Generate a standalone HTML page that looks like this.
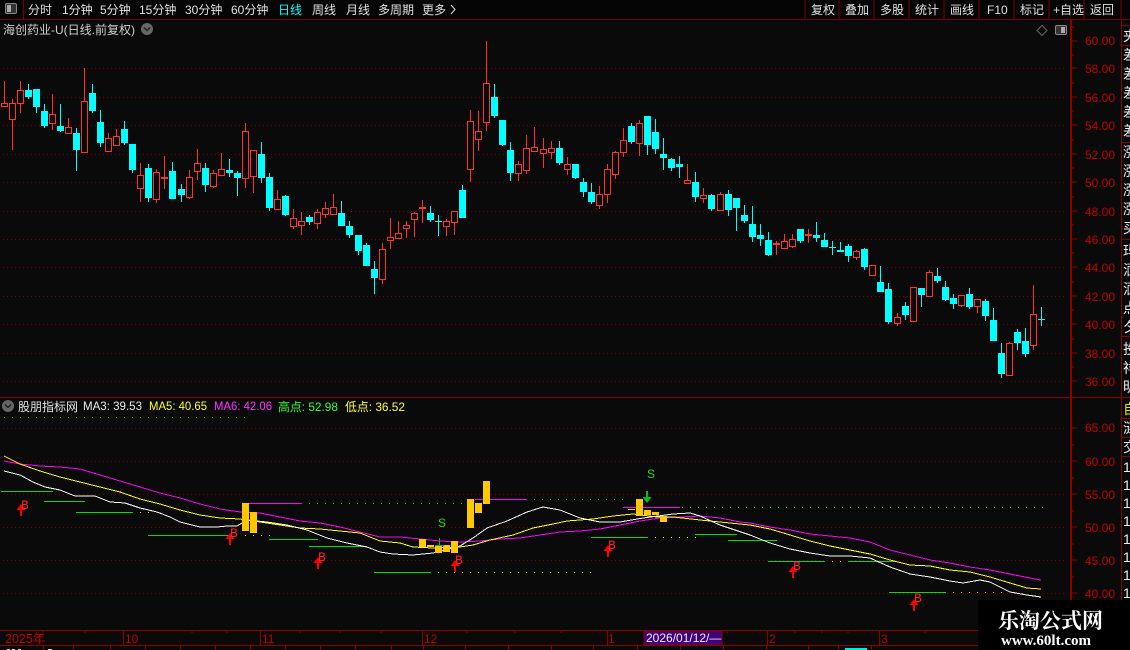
<!DOCTYPE html>
<html><head><meta charset="utf-8"><title>chart</title>
<style>
html,body{margin:0;padding:0;background:#0a0a0a;width:1130px;height:650px;overflow:hidden}
svg{display:block;position:absolute;left:0;top:0}
text{font-family:"Liberation Sans","Noto Sans CJK SC",sans-serif;font-size:12px;dominant-baseline:auto}
.l{fill:#c00000;font-size:12.5px}
.m{fill:#e0e0e0}
.g line{stroke:#6e0000;stroke-dasharray:1 3}
.ax line,.ax path{stroke:#8b0000}
.p text{fill:#eee;font-size:14px}
.b{font-family:"Liberation Mono",monospace;font-size:13px;fill:#ff2020}
</style></head><body>
<svg width="1130" height="650" viewBox="0 0 1130 650" xmlns="http://www.w3.org/2000/svg">
<rect width="1130" height="650" fill="#0a0a0a"/>
<!-- top bar -->
<rect width="1130" height="19" fill="#050505"/>
<g shape-rendering="crispEdges">
<rect x="0" y="19" width="1130" height="1" fill="#7a0000"/>
<rect x="23" y="0" width="1" height="19" fill="#7a0000"/>
<path d="M805 0V19M839 0V19M874 0V19M909 0V19M944 0V19M979 0V19M1014 0V19M1049 0V19M1084 0V19M1121 0V19" stroke="#7a0000" fill="none"/>
</g>
<rect x="5.5" y="3.5" width="11" height="10" rx="1.5" fill="#333" stroke="#888"/><rect x="7" y="5" width="4" height="7" fill="#aaa"/>
<g class="m">
<text x="28" y="14">分时</text><text x="62" y="14">1分钟</text><text x="100" y="14">5分钟</text><text x="139" y="14">15分钟</text><text x="185" y="14">30分钟</text><text x="231" y="14">60分钟</text>
<text x="278" y="14" style="fill:#00ffff">日线</text><text x="312" y="14">周线</text><text x="346" y="14">月线</text><text x="378" y="14">多周期</text><text x="422" y="14">更多</text>
<text x="811" y="14">复权</text><text x="845" y="14">叠加</text><text x="880" y="14">多股</text><text x="915" y="14">统计</text><text x="950" y="14">画线</text><text x="987" y="14">F10</text><text x="1020" y="14">标记</text><text x="1053" y="14">+自选</text><text x="1090" y="14">返回</text>
</g>
<path d="M451 5l4 4.500-4 4.500" fill="none" stroke="#ddd"/>
<!-- title -->
<text x="3" y="34" fill="#cfcfcf">海创药业-U(日线.前复权)</text>
<circle cx="147" cy="29" r="6" fill="#666"/><path d="M144 27.500l3 3 3-3" fill="none" stroke="#222" stroke-width="1.500"/>
<path d="M1042 25.500l5 5-5 5-5-5z" fill="none" stroke="#666"/>
<rect x="1055.500" y="25.500" width="11" height="9" rx="1.500" fill="#333" stroke="#888"/><rect x="1061" y="27" width="4" height="6" fill="#aaa"/>
<!-- grid -->
<g class="g" shape-rendering="crispEdges">
<line x1="3" x2="1067" y1="68.500" y2="68.500"/><line x1="3" x2="1067" y1="97.500" y2="97.500"/><line x1="3" x2="1067" y1="125.500" y2="125.500"/><line x1="3" x2="1067" y1="154.500" y2="154.500"/><line x1="3" x2="1067" y1="182.500" y2="182.500"/><line x1="3" x2="1067" y1="211.500" y2="211.500"/><line x1="3" x2="1067" y1="239.500" y2="239.500"/><line x1="3" x2="1067" y1="267.500" y2="267.500"/><line x1="3" x2="1067" y1="296.500" y2="296.500"/><line x1="3" x2="1067" y1="324.500" y2="324.500"/><line x1="3" x2="1067" y1="353.500" y2="353.500"/><line x1="3" x2="1067" y1="381.500" y2="381.500"/>
<line x1="3" x2="1067" y1="428.500" y2="428.500"/><line x1="3" x2="1067" y1="461.500" y2="461.500"/><line x1="3" x2="1067" y1="494.500" y2="494.500"/><line x1="3" x2="1067" y1="527.500" y2="527.500"/><line x1="3" x2="1067" y1="560.500" y2="560.500"/><line x1="3" x2="1067" y1="593.500" y2="593.500"/>
</g>
<g id="candles" shape-rendering="crispEdges"></g>
<!-- axes -->
<g class="ax" shape-rendering="crispEdges" fill="none">
<path d="M1070.500 20V630M1071.500 20V630" />
<path d="M0 397.500H1130M0 630.500H1130M0 645.500H1130M1121.500 20V650"/>
<path d="M1071 41h6M1071 68h6M1071 97h6M1071 125h6M1071 154h6M1071 182h6M1071 211h6M1071 239h6M1071 267h6M1071 296h6M1071 324h6M1071 353h6M1071 381h6M1071 55h3M1071 83h3M1071 111h3M1071 140h3M1071 168h3M1071 197h3M1071 225h3M1071 253h3M1071 282h3M1071 310h3M1071 339h3M1071 367h3M1071 27h3"/>
<path d="M1071 428h6M1071 461h6M1071 494h6M1071 527h6M1071 560h6M1071 593h6M1071 445h3M1071 478h3M1071 511h3M1071 544h3M1071 577h3M1071 610h3"/>
<path d="M1121 25.500h9M1121 45.500h9M1121 142.500h9M1121 239.500h9M1121 336.500h9M1121 418.500h9M1121 437.500h9M1121 456.500h9"/>
<path d="M123.500 630V645M260.500 630V645M422.500 630V645M607.500 630V645M767.500 630V645M879.500 630V645"/>
<path d="M43 630v3M85 630v3M192 630v3M227 630v3M300 630v3M340 630v3M381 630v3M467 630v3M515 630v3M561 630v3M727 630v3M795 630v3M822 630v3M848 630v3M925 630v3"/>
<path d="M43.500 646V650M73.500 646V650M110.500 646V650M145.500 646V650M180.500 646V650M215.500 646V650M250.500 646V650M285.500 646V650M320.500 646V650M355.500 646V650M391.500 646V650M423.500 646V650M465.500 646V650M508.500 646V650M551.500 646V650M593.500 646V650M637.500 646V650M680.500 646V650M723.500 646V650M766.500 646V650M808.500 646V650M838.500 646V650M871.500 646V650"/>
</g>
<g class="l">
<text x="1085" y="45">60.00</text><text x="1085" y="73">58.00</text><text x="1085" y="102">56.00</text><text x="1085" y="130">54.00</text><text x="1085" y="159">52.00</text><text x="1085" y="187">50.00</text><text x="1085" y="216">48.00</text><text x="1085" y="244">46.00</text><text x="1085" y="272">44.00</text><text x="1085" y="301">42.00</text><text x="1085" y="329">40.00</text><text x="1085" y="358">38.00</text><text x="1085" y="386">36.00</text>
<text x="1085" y="432">65.00</text><text x="1085" y="466">60.00</text><text x="1085" y="499">55.00</text><text x="1085" y="532">50.00</text><text x="1085" y="565">45.00</text><text x="1085" y="598">40.00</text>
</g>
<!-- right panel text (clipped) -->
<svg x="1122" y="20" width="8" height="630" viewBox="1122 20 8 630" overflow="hidden"><g class="p">
<text x="1123" y="41">夹</text><text x="1123" y="60">差</text><text x="1123" y="79">差</text><text x="1123" y="98">差</text><text x="1123" y="117">差</text><text x="1123" y="136">差</text>
<text x="1123" y="157">涨</text><text x="1123" y="176">涨</text><text x="1123" y="195">涨</text><text x="1123" y="214">涨</text><text x="1123" y="233">买</text>
<text x="1123" y="256">玛</text><text x="1123" y="275">湎</text><text x="1123" y="294">湎</text><text x="1123" y="313">点</text><text x="1123" y="332">夕</text>
<text x="1123" y="354">投</text><text x="1123" y="373">祥</text><text x="1123" y="392">明</text>
<text x="1123" y="414" style="fill:#e6e600">自</text><text x="1123" y="433">涟</text><text x="1123" y="452">交</text>
<text x="1123" y="472">1</text><text x="1123" y="490">1</text><text x="1123" y="508">1</text><text x="1123" y="526">1</text><text x="1123" y="544">1</text><text x="1123" y="562">1</text><text x="1123" y="580">1</text><text x="1123" y="598">1</text>
</g></svg>
<!-- sub header -->
<circle cx="8" cy="406" r="6" fill="#666"/><path d="M5 404.500l3 3 3-3" fill="none" stroke="#222" stroke-width="1.500"/>
<text x="18" y="411" fill="#e0e0e0">股朋指标网</text>
<text x="83" y="410" fill="#e8e8e8" textLength="59" lengthAdjust="spacingAndGlyphs">MA3: 39.53</text>
<text x="149" y="410" fill="#ffff33" textLength="58" lengthAdjust="spacingAndGlyphs">MA5: 40.65</text>
<text x="214" y="410" fill="#ff33ff" textLength="58" lengthAdjust="spacingAndGlyphs">MA6: 42.06</text>
<text x="278" y="411" fill="#33ff33" textLength="60" lengthAdjust="spacingAndGlyphs">高点: 52.98</text>
<text x="345" y="411" fill="#ffff33" textLength="60" lengthAdjust="spacingAndGlyphs">低点: 36.52</text>
<!-- dots -->
<g shape-rendering="crispEdges" fill="none" stroke-dasharray="1 7">
<path stroke="#00e000" d="M4 417.500H250M309 503.500H466M534 499.500H628M682 507.500H1044"/>
<path stroke="#e6e600" d="M438 572.500H594M655 537.500H697M245 535.500H272M832 561.500H842M953 592.500H1004M140 512.500H150"/>
</g>
<!-- segments -->
<g shape-rendering="crispEdges" fill="none" stroke="#00e000">
<path d="M1 491.500H53M44 501.500H85M76 512.500H133M148 535.500H230M269 539.500H318M309 546.500H367M374 572.500H431M591 537.500H648M695 534.500H737M728 540.500H777M768 561.500H825M848 561.500H895M889 592.500H946"/>
<path stroke="#ff00ff" d="M249 503.500H302M475 499.500H527M623 507.500H680"/>
</g>
<!-- MA lines -->
<g fill="none" shape-rendering="crispEdges" stroke-width="1">
<polyline stroke="#ff00ff" points="4,461 20,464 40,466 60,467 80,469 100,475 120,481 140,487 160,493 180,498 200,504 220,509 240,512 260,513 280,517 300,521 320,523 340,527 360,532 380,537 400,537 420,539 440,541 460,542 480,541 500,539 520,538 540,535 560,532 580,531 600,529 620,525 640,521 660,518 680,517 700,516 720,518 740,522 750,523 770,527 790,530 810,534 830,536 850,538 870,542 890,550 910,555 930,560 950,563 970,567 990,570 1010,574 1030,578 1041,580"/>
<polyline stroke="#ffff00" points="4,456 20,464 40,471 60,477 80,482 100,487 120,492 140,499 160,504 180,510 200,515 220,518 240,519 260,522 280,525 300,528 320,529 340,531 360,533 380,541 400,543 413,547 433,548 460,547 473,545 490,540 513,535 533,528 553,524 567,521 593,519 613,516 633,514 657,517 673,517 700,520 720,522 750,525 770,529 790,535 810,541 830,546 850,550 870,554 890,560 910,565 930,566 950,570 970,572 990,577 1010,583 1027,588 1041,589"/>
<polyline stroke="#ffffff" points="4,471 20,475 33,482 45,487 60,490 75,496 95,496 110,502 125,503 140,508 157,512 170,517 180,522 200,527 217,527 227,526 237,526 247,520 267,522 287,525 307,530 327,538 347,543 367,547 380,552 393,554 413,555 433,553 460,546 473,538 487,528 507,521 527,512 543,507 560,510 580,518 600,522 620,522 643,518 673,514 690,513 700,516 720,525 750,535 770,543 790,549 810,553 830,556 850,556 870,558 890,567 910,574 930,577 950,581 963,583 980,580 990,582 1010,592 1027,595 1041,597"/>
</g>
<!-- orange bars -->
<g fill="#ffc800" shape-rendering="crispEdges">
<rect x="242" y="503" width="7" height="28"/><rect x="250" y="512" width="7" height="21"/>
<rect x="419" y="539" width="7" height="8"/><rect x="427" y="545" width="7" height="2"/><rect x="435" y="545" width="7" height="8"/><rect x="443" y="545" width="7" height="7"/><rect x="451" y="541" width="7" height="12"/>
<rect x="467" y="499" width="7" height="29"/><rect x="475" y="503" width="7" height="10"/><rect x="483" y="481" width="7" height="23"/>
<rect x="628" y="509" width="7" height="1"/><rect x="636" y="499" width="7" height="17"/><rect x="644" y="510" width="7" height="5"/><rect x="652" y="512" width="7" height="3"/><rect x="660" y="516" width="7" height="6"/>
</g>
<!-- S markers -->
<g fill="#22dd22" style="font-size:11px">
<text x="438" y="527">S</text><text x="647" y="478">S</text>
</g>
<path d="M646 491h2v6h3.500l-4.500 6-4.500-6h3.500z" fill="#00c020"/>
<path d="M439 538h1v7h4v1h-9v-1h4z" fill="#00c020"/>
<!-- B markers -->
<g fill="#ff0000">
<path d="M21 504l4.500 6h-3.500v6h-2v-6h-3.500z"/>
<path d="M230 533l4.500 6h-3.500v6h-2v-6h-3.500z"/>
<path d="M318 557l4.500 6h-3.500v6h-2v-6h-3.500z"/>
<path d="M455 560l4.500 6h-3.500v6h-2v-6h-3.500z"/>
<path d="M608 545l4.500 6h-3.500v6h-2v-6h-3.500z"/>
<path d="M793 566l4.500 6h-3.500v6h-2v-6h-3.500z"/>
<path d="M914 599l4.500 6h-3.500v6h-2v-6h-3.500z"/>
</g>
<text class="b" x="21" y="509">B</text>
<text class="b" x="230" y="537">B</text>
<text class="b" x="318" y="561">B</text>
<text class="b" x="455" y="564">B</text>
<text class="b" x="608" y="549">B</text>
<text class="b" x="793" y="570">B</text>
<text class="b" x="914" y="602">B</text>
<!-- date axis -->
<g fill="#c00000" style="font-size:13px">
<text x="5" y="643" style="font-size:12.5px">2025年</text><text x="125" y="643">10</text><text x="262" y="643">11</text><text x="424" y="643">12</text><text x="608" y="643">1</text><text x="769" y="643">2</text><text x="881" y="643">3</text>
</g>
<rect x="644" y="631" width="78" height="14" fill="#400080" stroke="#8b0000"/>
<text x="646" y="642" fill="#eee" style="font-size:12px">2026/01/12/—</text>
<!-- clipped bottom text -->
<path d="M7 649.500h3M12 649.500h3M18 649.500h3M48 649.500h4" stroke="#ddd" shape-rendering="crispEdges"/>
<rect x="845" y="648" width="22" height="2" fill="#00e8e8"/>
<!-- watermark -->
<rect x="978" y="600" width="152" height="50" fill="#000"/>
<text x="998" y="628" fill="#fff" style="font-size:21px;font-weight:bold;font-family:'Liberation Serif','Noto Serif CJK SC',serif">乐淘公式网</text>
<text x="1001" y="645" fill="#fff" textLength="90" lengthAdjust="spacingAndGlyphs" style="font-size:15px;font-weight:bold;font-family:'Liberation Serif',serif">www.60lt.com</text>
</svg>
<script>
var D="r81,103,106,106 r99,103,119,150 r81,90,103,113 c84,90,97,99 c89,89,107,113 c104,111,126,128 r94,114,123,130 c104,126,131,132 r118,127,133,134 c128,133,150,171 r68,101,152,153 c84,93,111,113 c110,122,143,147 r133,138,151,151 r129,136,145,145 c121,129,143,145 c144,144,170,173 r163,175,188,202 c164,168,198,202 r169,172,199,203 r156,177,179,189 c162,171,199,199 c184,189,195,202 r170,177,197,199 r149,163,171,180 c163,168,185,192 r170,173,186,188 r153,169,175,175 c159,170,173,177 c171,173,178,196 r123,131,178,188 r150,150,176,193 c142,154,178,183 c173,177,208,211 r190,199,209,210 c195,196,215,216 r209,218,226,229 r212,221,225,235 c215,217,222,225 r209,212,223,229 r202,208,214,218 r194,207,214,214 c201,213,226,226 c221,226,235,238 c235,235,251,255 c243,245,266,266 c261,269,278,294 r243,249,279,284 r218,237,240,249 r221,233,238,238 r221,225,228,238 r212,213,219,237 r200,207,209,223 c206,213,220,222 c215,221,222,236 r219,221,226,236 r211,211,222,235 c185,190,218,218 r110,121,169,182 r111,131,139,151 r41,83,122,131 c84,97,116,118 c120,120,145,146 c142,150,173,181 r161,164,173,181 r135,148,170,174 r127,147,151,151 r138,149,153,168 r141,148,152,159 c141,148,163,165 r157,164,169,175 c164,164,178,179 c178,182,192,197 c183,192,202,204 r186,194,205,209 r164,169,194,203 r151,152,174,179 r128,140,152,157 c123,126,142,144 r120,123,143,156 c116,116,145,155 c119,132,149,154 c138,154,158,170 c158,159,168,171 c156,164,167,178 r164,180,183,183 c172,182,197,202 r188,195,198,203 c194,195,209,211 r192,194,210,210 c190,194,210,216 c198,198,208,231 c205,215,221,223 c206,224,237,242 c224,235,239,246 c232,240,255,256 r241,243,245,255 r234,241,248,248 r234,239,246,248 c229,229,241,243 r229,234,236,243 c222,235,238,242 c233,240,247,247 c241,247,248,255 c242,250,252,252 c244,246,256,262 r250,251,257,260 c248,249,267,270 r265,265,275,275 c266,282,292,292 c283,289,322,324 r313,317,323,326 c302,306,315,320 r287,287,321,321 c288,288,295,307 r270,272,296,296 c268,276,281,283 c281,287,300,301 c294,298,304,309 r295,295,305,307 c288,294,307,309 r299,299,306,313 c299,301,316,321 c308,320,341,341 c343,353,374,378 r342,343,375,375 c329,332,343,350 c328,341,354,357 r285,314,345,350 c307,319,320,326".split(" ");
var s="";
D.forEach(function(v,i){
 var r=v[0]=="r",a=v.slice(1).split(",").map(Number),h=a[0],t=a[1],b=a[2],l=a[3];
 var x=4+8*i+(i>=22?1:0)+(i>=44?1:0)+(i>=67?1:0)+(i>=89?1:0)+(i>=111?1:0);
 var c=r?"#ff3232":"#00ffff";
 if(h<t)s+='<rect x="'+x+'" y="'+h+'" width="1" height="'+(t-h)+'" fill="'+c+'"/>';
 if(l>b)s+='<rect x="'+x+'" y="'+b+'" width="1" height="'+(l-b)+'" fill="'+c+'"/>';
 if(r&&b-t>2)s+='<rect x="'+(x-3+.5)+'" y="'+(t+.5)+'" width="6" height="'+(b-t)+'" fill="#0a0a0a" stroke="'+c+'"/>';
 else s+='<rect x="'+(x-3)+'" y="'+t+'" width="7" height="'+Math.max(1,b-t)+'" fill="'+c+'"/>';
});
document.getElementById("candles").innerHTML=s;
</script>
</body></html>
